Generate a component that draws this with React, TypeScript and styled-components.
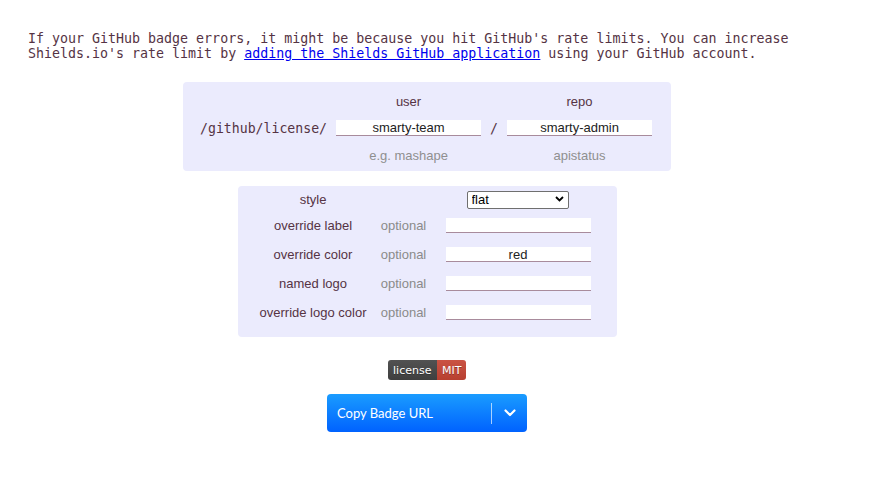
import React from "react";
import styled, { createGlobalStyle } from "styled-components";

const Global = createGlobalStyle`
  html, body { margin: 0; padding: 0; background: #ffffff; }
  body { font-family: "Liberation Sans", Arial, sans-serif; color: #534; }
`;

const Page = styled.div`
  width: 854px;
  display: flex;
  flex-direction: column;
  align-items: center;
`;

const Intro = styled.p`
  align-self: stretch;
  margin: 31px 0 0 0;
  padding: 0 0 0 28px;
  font-family: "DejaVu Sans Mono", monospace;
  font-size: 13.3px;
  line-height: 15px;
  color: #534;
  a { color: #0000ee; text-decoration: underline; }
`;

const PathPanel = styled.div`
  margin-top: 21px;
  background: #ebebfd;
  border-radius: 4px;
  padding: 10px 19px 7px 17px;
  display: grid;
  grid-template-columns: auto 145px auto 145px;
  grid-template-rows: 18px 16px 18px;
  column-gap: 9px;
  row-gap: 10px;
  align-items: center;
`;

const PathText = styled.span`
  font-family: "DejaVu Sans Mono", monospace;
  font-size: 13.2px;
  color: #534;
`;

const ColLabel = styled.span<{ $muted?: boolean }>`
  font-size: 13px;
  text-align: center;
  color: ${(p) => (p.$muted ? "#8f8f8f" : "#534")};
`;

const Field = styled.input<{ $short?: boolean }>`
  box-sizing: border-box;
  width: 145px;
  height: ${(p) => (p.$short ? "15px" : "16px")};
  border: 0;
  border-bottom: 1px solid #a88b9c;
  background: #ffffff;
  padding: 0;
  margin: 0;
  font-family: "Liberation Sans", Arial, sans-serif;
  font-size: 13px;
  line-height: 14px;
  text-align: center;
  color: #222;
  outline: none;
`;

const OptionsPanel = styled.div`
  margin-top: 15px;
  background: #ebebfd;
  border-radius: 4px;
  padding: 4px 26px 17px 22px;
  display: flex;
  flex-direction: column;
  gap: 14px;
`;

const OptionRow = styled.div<{ $tight?: boolean }>`
  display: grid;
  grid-template-columns: 107px 46px 150px;
  column-gap: 14px;
  align-items: center;
  justify-items: center;
  height: ${(p) => (p.$tight ? "18px" : "15px")};
  margin-bottom: ${(p) => (p.$tight ? "-4px" : "0")};
  & > input { justify-self: end; }
`;

const OptionLabel = styled.span<{ $muted?: boolean }>`
  font-size: 13px;
  white-space: nowrap;
  color: ${(p) => (p.$muted ? "#8a8a8a" : "#534")};
`;

const SelectWrap = styled.div`
  position: relative;
  width: 102px;
  height: 18px;
  margin-left: 4px;
`;

const Select = styled.select`
  box-sizing: border-box;
  appearance: none;
  width: 102px;
  height: 18px;
  border: 1px solid #6f6f6f;
  border-radius: 2px;
  background: #ffffff;
  padding: 0 0 0 4px;
  margin: 0;
  font-family: "Liberation Sans", Arial, sans-serif;
  font-size: 13px;
  color: #000;
`;

const SelectArrow = styled.svg`
  position: absolute;
  right: 5px;
  top: 6px;
  pointer-events: none;
`;

const Badge = styled.div`
  margin-top: 23px;
  display: flex;
  height: 20px;
  border-radius: 3px;
  overflow: hidden;
  font-family: "DejaVu Sans", Verdana, sans-serif;
  font-size: 11px;
  color: #ffffff;
`;

const BadgePart = styled.span<{ $bg: string }>`
  display: flex;
  align-items: center;
  padding: 0 ${(p) => (p.$bg === "gray" ? "5.5px" : "5px")};
  background-image: linear-gradient(rgba(187, 187, 187, 0.1), rgba(0, 0, 0, 0.1));
  background-color: ${(p) => (p.$bg === "gray" ? "#464646" : "#cc4736")};
  text-shadow: 0 1px 0 rgba(1, 1, 1, 0.3);
`;

const CopyButton = styled.div`
  margin-top: 14px;
  width: 200px;
  height: 38px;
  box-sizing: border-box;
  border-radius: 4px;
  background: linear-gradient(#1a9cff, #0062ff);
  display: flex;
  align-items: center;
  font-family: Lato, "Liberation Sans", sans-serif;
  font-size: 13px;
  color: #ffffff;
`;

const ButtonLabel = styled.span`
  flex: 0 0 164px;
  box-sizing: border-box;
  padding-left: 10px;
`;

const Divider = styled.span`
  width: 1px;
  height: 21px;
  background: rgba(255, 255, 255, 0.65);
`;

const Caret = styled.span`
  flex: 1;
  display: flex;
  justify-content: center;
  align-items: center;
`;

const options = [
  { label: "override label", value: "" },
  { label: "override color", value: "red" },
  { label: "named logo", value: "" },
  { label: "override logo color", value: "" },
];

export default function App() {
  return (
    <>
      <Global />
      <Page>
        <Intro>
          If your GitHub badge errors, it might be because you hit GitHub's rate limits. You can increase Shields.io's rate limit by{" "}
          <a href="#">adding the Shields GitHub application</a> using your GitHub account.
        </Intro>

        <PathPanel>
          <span />
          <ColLabel>user</ColLabel>
          <span />
          <ColLabel>repo</ColLabel>

          <PathText>/github/license/</PathText>
          <Field defaultValue="smarty-team" />
          <PathText>/</PathText>
          <Field defaultValue="smarty-admin" />

          <span />
          <ColLabel $muted>e.g. mashape</ColLabel>
          <span />
          <ColLabel $muted>apistatus</ColLabel>
        </PathPanel>

        <OptionsPanel>
          <OptionRow $tight>
            <OptionLabel>style</OptionLabel>
            <span />
            <SelectWrap>
              <Select defaultValue="flat">
                <option value="flat">flat</option>
                <option value="flat-square">flat-square</option>
                <option value="plastic">plastic</option>
              </Select>
              <SelectArrow width="9" height="6" viewBox="0 0 9 6">
                <path d="M1 1 L4.5 4.5 L8 1" fill="none" stroke="#000" strokeWidth="1.8" />
              </SelectArrow>
            </SelectWrap>
          </OptionRow>
          {options.map((o) => (
            <OptionRow key={o.label}>
              <OptionLabel>{o.label}</OptionLabel>
              <OptionLabel $muted>optional</OptionLabel>
              <Field $short defaultValue={o.value} />
            </OptionRow>
          ))}
        </OptionsPanel>

        <Badge>
          <BadgePart $bg="gray">license</BadgePart>
          <BadgePart $bg="red">MIT</BadgePart>
        </Badge>

        <CopyButton>
          <ButtonLabel>Copy Badge URL</ButtonLabel>
          <Divider />
          <Caret>
            <svg width="12" height="8" viewBox="0 0 12 8">
              <path d="M1.5 1.5 L6 6 L10.5 1.5" fill="none" stroke="#ffffff" strokeWidth="2.2" strokeLinecap="round" strokeLinejoin="round" />
            </svg>
          </Caret>
        </CopyButton>
      </Page>
    </>
  );
}
